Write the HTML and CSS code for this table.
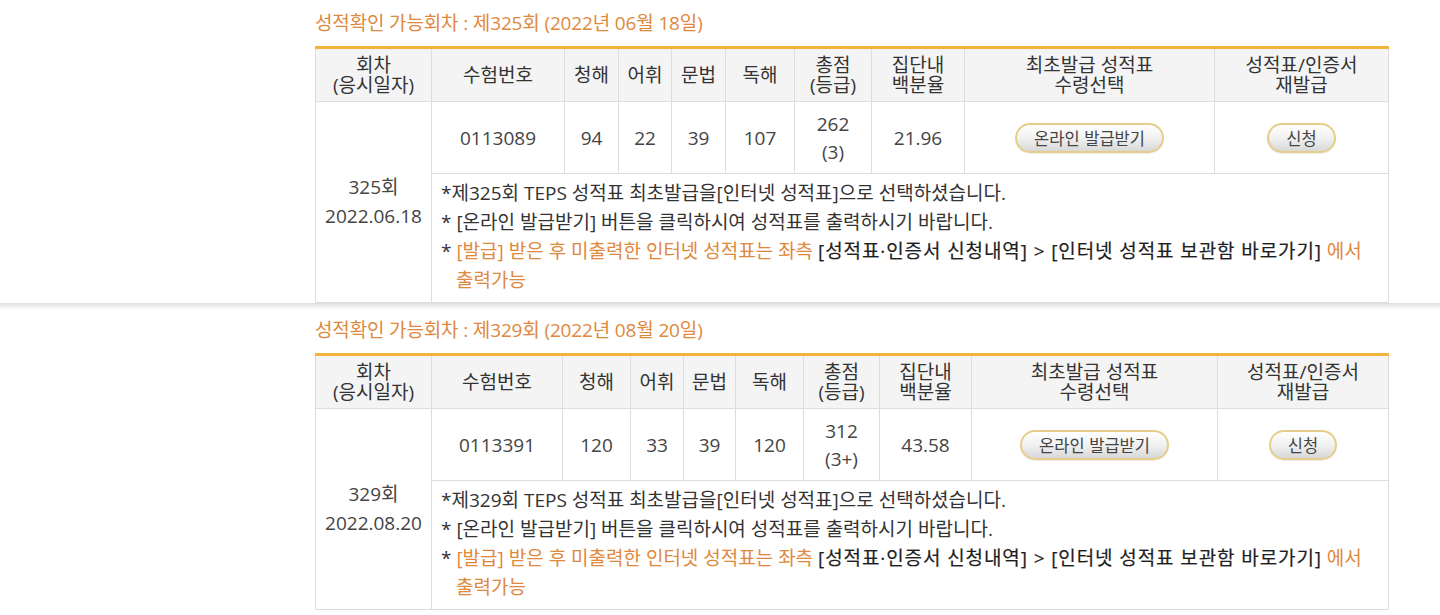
FILE: index.html
```html
<!DOCTYPE html>
<html lang="ko">
<head>
<meta charset="utf-8">
<title>성적확인</title>
<link rel="stylesheet" href="styles.css">
</head>
<body>
<div class="page">
  <section class="block block-first">
    <h2 class="block-title">성적확인 가능회차 : 제325회 (2022년 06월 18일)</h2>
    <table class="scores scores-a">
      <colgroup>
        <col class="c-round"><col class="c-id"><col class="c-l"><col class="c-v"><col class="c-g"><col class="c-r"><col class="c-total"><col class="c-pct"><col class="c-first"><col class="c-re">
      </colgroup>
      <thead>
        <tr>
          <th>회차<br>(응시일자)</th>
          <th>수험번호</th>
          <th>청해</th>
          <th>어휘</th>
          <th>문법</th>
          <th>독해</th>
          <th>총점<br>(등급)</th>
          <th>집단내<br>백분율</th>
          <th>최초발급 성적표<br>수령선택</th>
          <th>성적표/인증서<br>재발급</th>
        </tr>
      </thead>
      <tbody>
        <tr class="row-score">
          <td rowspan="2" class="round">325회<br>2022.06.18</td>
          <td>0113089</td>
          <td>94</td>
          <td>22</td>
          <td>39</td>
          <td>107</td>
          <td class="total">262<br>(3)</td>
          <td>21.96</td>
          <td><button class="pill" type="button">온라인 발급받기</button></td>
          <td><button class="pill" type="button">신청</button></td>
        </tr>
        <tr class="row-notes">
          <td colspan="9" class="notes">
            <p>*제325회 TEPS 성적표 최초발급을[인터넷 성적표]으로 선택하셨습니다.</p>
            <p>* [온라인 발급받기] 버튼을 클릭하시여 성적표를 출력하시기 바랍니다.</p>
            <p>* <span class="warn">[발급] 받은 후 미출력한 인터넷 성적표는 좌측</span> <span class="path">[성적표·인증서 신청내역] &gt; [인터넷 성적표 보관함 바로가기]</span> <span class="warn">에서</span> <span class="warn">출력가능</span></p>
          </td>
        </tr>
      </tbody>
    </table>
  </section>
  <div class="sep"></div>
  <section class="block block-second">
    <h2 class="block-title">성적확인 가능회차 : 제329회 (2022년 08월 20일)</h2>
    <table class="scores scores-b">
      <colgroup>
        <col class="c-round"><col class="c-id"><col class="c-l"><col class="c-v"><col class="c-g"><col class="c-r"><col class="c-total"><col class="c-pct"><col class="c-first"><col class="c-re">
      </colgroup>
      <thead>
        <tr>
          <th>회차<br>(응시일자)</th>
          <th>수험번호</th>
          <th>청해</th>
          <th>어휘</th>
          <th>문법</th>
          <th>독해</th>
          <th>총점<br>(등급)</th>
          <th>집단내<br>백분율</th>
          <th>최초발급 성적표<br>수령선택</th>
          <th>성적표/인증서<br>재발급</th>
        </tr>
      </thead>
      <tbody>
        <tr class="row-score">
          <td rowspan="2" class="round">329회<br>2022.08.20</td>
          <td>0113391</td>
          <td>120</td>
          <td>33</td>
          <td>39</td>
          <td>120</td>
          <td class="total">312<br>(3+)</td>
          <td>43.58</td>
          <td><button class="pill" type="button">온라인 발급받기</button></td>
          <td><button class="pill" type="button">신청</button></td>
        </tr>
        <tr class="row-notes">
          <td colspan="9" class="notes">
            <p>*제329회 TEPS 성적표 최초발급을[인터넷 성적표]으로 선택하셨습니다.</p>
            <p>* [온라인 발급받기] 버튼을 클릭하시여 성적표를 출력하시기 바랍니다.</p>
            <p>* <span class="warn">[발급] 받은 후 미출력한 인터넷 성적표는 좌측</span> <span class="path">[성적표·인증서 신청내역] &gt; [인터넷 성적표 보관함 바로가기]</span> <span class="warn">에서</span> <span class="warn">출력가능</span></p>
          </td>
        </tr>
      </tbody>
    </table>
  </section>
</div>
</body>
</html>
```

FILE: styles.css
```css
* { box-sizing: border-box; }

html, body {
  margin: 0;
  padding: 0;
  background: #ffffff;
}

body {
  font-family: "Open Sans", "Noto Sans CJK KR", sans-serif;
  font-size: 19px;
  color: #444444;
}

.page {
  width: 1440px;
  overflow: hidden;
}

.block {
  padding-left: 315px;
}

.block-first {
  padding-top: 10px;
}

.block-second {
  padding-top: 7px;
}

.block-title {
  margin: 0 0 10px 0;
  font-size: 19px;
  line-height: 26px;
  font-weight: 400;
  color: #e0883c;
  letter-spacing: -0.15px;
}

.scores {
  width: 1073px;
  table-layout: fixed;
  border-collapse: collapse;
  border-top: 3px solid #f1b53c;
}

.scores th,
.scores td {
  border: 1px solid #dddddd;
  text-align: center;
  vertical-align: middle;
  padding: 0;
  font-weight: 400;
}

.scores th {
  height: 54px;
  background: #f4f4f4;
  color: #333333;
  line-height: 20px;
  border-top: none;
}

.row-score td {
  height: 72px;
  color: #444444;
}

.total {
  line-height: 28px;
}

.round {
  line-height: 29px;
}

.notes {
  text-align: left !important;
  padding: 5px 10px 7px 9px !important;
  line-height: 29px;
  color: #333333;
}

.notes p {
  margin: 0;
  padding-left: 15px;
  text-indent: -15px;
}

.warn {
  color: #e0883c;
}

.path {
  color: #1e1e1e;
  letter-spacing: 0.9px;
  -webkit-text-stroke: 0.2px #1e1e1e;
}

.pill {
  height: 30px;
  padding: 0 17px;
  border: 2px solid #e6cd89;
  border-radius: 15px;
  background: linear-gradient(to bottom, #ffffff 0%, #f1f1f1 50%, #d8d8d8 100%);
  font-family: "Noto Sans CJK KR", sans-serif;
  font-size: 16.5px;
  line-height: 26px;
  color: #444444;
  box-shadow: 0 1px 1px rgba(0, 0, 0, 0.08);
  cursor: pointer;
}

.sep {
  height: 7px;
  background: linear-gradient(to bottom, #dcdcdc 0%, #ececec 40%, #ffffff 100%);
}

/* column widths, first table */
.scores-a .c-round { width: 116px; }
.scores-a .c-id { width: 133px; }
.scores-a .c-l { width: 54px; }
.scores-a .c-v { width: 53px; }
.scores-a .c-g { width: 54px; }
.scores-a .c-r { width: 69px; }
.scores-a .c-total { width: 77px; }
.scores-a .c-pct { width: 93px; }
.scores-a .c-first { width: 250px; }
.scores-a .c-re { width: 174px; }

/* column widths, second table */
.scores-b .c-round { width: 116px; }
.scores-b .c-id { width: 131px; }
.scores-b .c-l { width: 68px; }
.scores-b .c-v { width: 53px; }
.scores-b .c-g { width: 52px; }
.scores-b .c-r { width: 68px; }
.scores-b .c-total { width: 76px; }
.scores-b .c-pct { width: 92px; }
.scores-b .c-first { width: 246px; }
.scores-b .c-re { width: 171px; }
```
